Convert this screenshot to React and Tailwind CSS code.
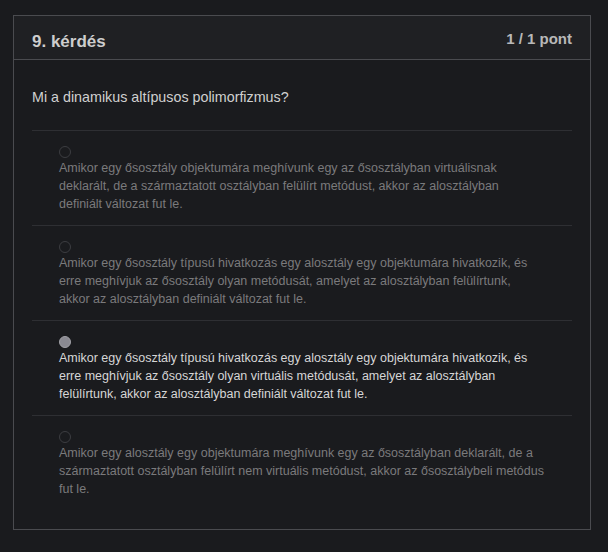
import React from 'react';

const options = [
    {
        text: 'Amikor egy ősosztály objektumára meghívunk egy az ősosztályban virtuálisnak deklarált, de a származtatott osztályban felülírt metódust, akkor az alosztályban definiált változat fut le.',
        selected: false,
    },
    {
        text: 'Amikor egy ősosztály típusú hivatkozás egy alosztály egy objektumára hivatkozik, és erre meghívjuk az ősosztály olyan metódusát, amelyet az alosztályban felülírtunk, akkor\u00a0az alosztályban definiált változat fut le.',
        selected: false,
    },
    {
        text: 'Amikor egy ősosztály típusú hivatkozás egy alosztály egy objektumára hivatkozik, és erre meghívjuk az ősosztály olyan virtuális metódusát, amelyet az alosztályban felülírtunk, akkor az alosztályban definiált változat fut le.',
        selected: true,
    },
    {
        text: 'Amikor egy alosztály egy objektumára meghívunk egy az ősosztályban deklarált, de a származtatott osztályban felülírt nem virtuális metódust, akkor az ősosztálybeli metódus fut le.',
        selected: false,
    },
];

const App = () => {
    return (
        <div className="min-h-screen bg-[#1a1b1e] pt-[15px] pl-[13px] pr-[17px] font-['Liberation_Sans',Arial,sans-serif]">
            <div className="border border-[#4a4b4f] bg-[#1a1b1e]">
                <div className="flex items-start justify-between h-[44px] px-[18px] bg-[#1f2023] border-b border-[#4a4b4f]">
                    <h2 className="text-[17px] font-bold text-[#cdcdcd] mt-[13px]">9. kérdés</h2>
                    <span className="text-[15px] font-bold text-[#b8b8b8] mt-[12px]">1 / 1 pont</span>
                </div>
                <div className="px-[18px] pt-[28px] pb-[19px]">
                    <p className="text-[14.3px] text-[#d0d0d0] leading-[18px] mb-[24px]">Mi a dinamikus altípusos polimorfizmus?</p>
                    {options.map((o, i) => (
                        <div key={i} className="border-t border-[#2e2f33] pt-[15px] pb-[12px] pl-[27px] pr-[27px]">
                            {o.selected ? (
                                <div className="w-[12px] h-[12px] rounded-full bg-[#8a8a92] border border-[#a0a0a6]" />
                            ) : (
                                <div className="w-[12px] h-[12px] rounded-full border border-[#3c3d41]" />
                            )}
                            <p className={`text-[12.5px] leading-[18px] mt-[1px] ${o.selected ? 'text-[#d6d6d6]' : 'text-[#7a7a7c]'}`}>
                                {o.text}
                            </p>
                        </div>
                    ))}
                </div>
            </div>
        </div>
    );
};

export default App;
